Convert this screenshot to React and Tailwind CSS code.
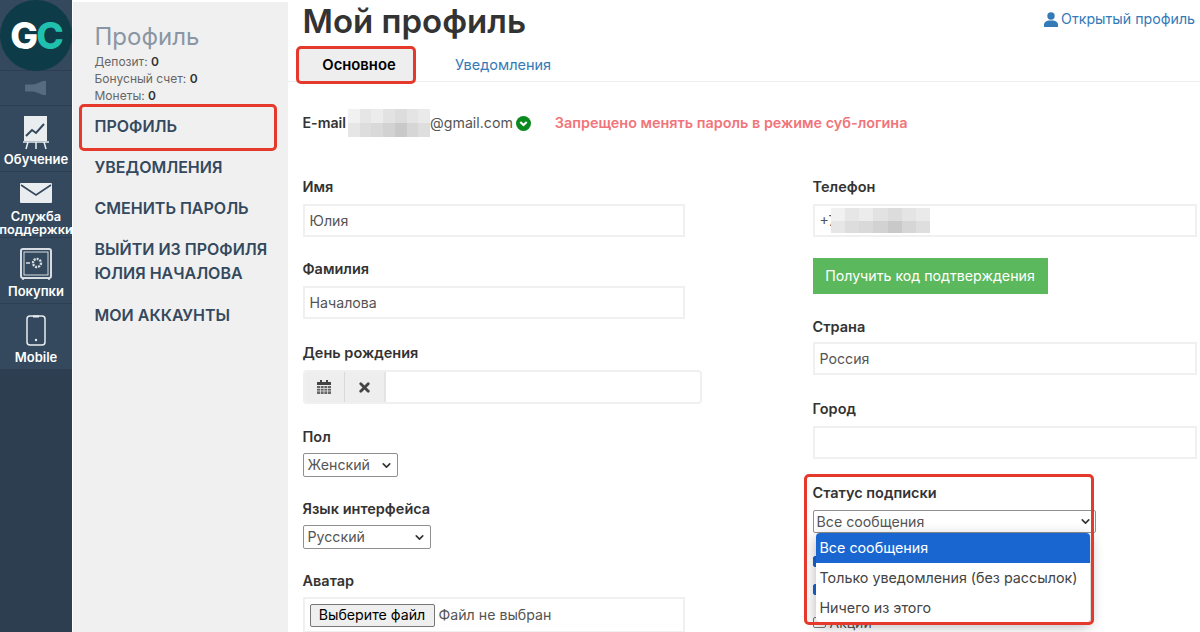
import { ChevronDown, X } from "lucide-react";

const sideLinks = [
  { label: "ПРОФИЛЬ", className: "mt-[10px]" },
  { label: "УВЕДОМЛЕНИЯ", className: "mt-[17px]" },
  { label: "СМЕНИТЬ ПАРОЛЬ", className: "mt-[17px]" },
  { label: "ВЫЙТИ ИЗ ПРОФИЛЯ ЮЛИЯ НАЧАЛОВА", className: "mt-[17px] w-[180px]" },
  { label: "МОИ АККАУНТЫ", className: "mt-[18px]" },
];

const mosaicTop = ["bg-[#f1f1f1]", "bg-[#e6e6e6]", "bg-[#ececec]", "bg-[#e2e2e2]", "bg-[#dcdcdc]", "bg-[#e4e4e4]", "bg-[#eaeaea]"];
const mosaicBottom = ["bg-[#e6e6e6]", "bg-[#dddddd]", "bg-[#d9d9d9]", "bg-[#d2d2d2]", "bg-[#c9c9c9]", "bg-[#d6d6d6]", "bg-[#dedede]"];

function Mosaic({ className }) {
  return (
    <div className={`grid grid-cols-7 ${className}`}>
      {mosaicTop.map((c, i) => (
        <div key={`t${i}`} className={c} />
      ))}
      {mosaicBottom.map((c, i) => (
        <div key={`b${i}`} className={c} />
      ))}
    </div>
  );
}

function RedBox({ className }) {
  return <div className={`absolute rounded-[5px] border-[3px] border-[#e5392c] ${className}`} />;
}

function Label({ children }) {
  return <div className="h-5 text-[14.5px] leading-5 font-semibold text-[#333]">{children}</div>;
}

function TextBox({ value, className = "mt-[7px]" }) {
  return (
    <div className={`flex h-[33px] items-center border-2 border-[#f0f0f0] px-[5px] text-[14.2px] text-[#555] ${className}`}>
      {value}
    </div>
  );
}

function SelectBox({ value, className = "" }) {
  return (
    <div className={`mt-[6px] flex h-6 items-center justify-between rounded-[2px] border border-[#8f8f8f] pl-1 pr-1 text-[14.2px] text-[#555] ${className}`}>
      <span>{value}</span>
      <ChevronDown size={13} strokeWidth={3} className="text-[#333]" />
    </div>
  );
}

function CheckRow({ label, checked, className = "" }) {
  return (
    <div className={`flex h-[14px] items-center gap-[4px] text-[14px] text-[#555] ${className}`}>
      <div className={`h-[11px] w-[13px] rounded-[2px] border ${checked ? "border-[#1a66d0] bg-[#1a66d0]" : "border-[#777] bg-white"}`} />
      {label}
    </div>
  );
}

function Rail() {
  return (
    <aside className="flex w-[72px] shrink-0 flex-col overflow-hidden bg-[#2c3e50]">
      <div className="h-[71px] border-b border-[#2c3e50] bg-[#34495e]">
        <div className="flex h-[71px] w-[72px] items-center justify-center rounded-full bg-[#0e3b48] text-[37px] leading-none font-extrabold tracking-[-2px]">
          <span className="text-white">G</span>
          <span className="text-[#20c0ae]">C</span>
        </div>
      </div>
      <div className="flex h-[35px] items-center justify-center border-b border-[#2c3e50] bg-[#34495e]">
        <svg width="22" height="14" viewBox="0 0 22 14" className="text-[#566a80]">
          <path d="M0 4.500a1 1 0 0 1 1-1h8L18 0h3v14h-3L9 10.500H1a1 1 0 0 1-1-1z" fill="currentColor" />
        </svg>
      </div>
      <div className="flex h-[66px] flex-col items-center border-b border-[#2c3e50] bg-[#34495e] pt-[10px]">
        <svg width="26" height="34" viewBox="0 0 26 34" className="shrink-0 text-[#e9edf0]">
          <rect x="1" y="0" width="23" height="25" fill="currentColor" />
          <path d="M3 20l6-6 4 3 8-9" stroke="#34495e" strokeWidth="2" fill="none" />
          <path d="M0 26h26M5 26l-2 7M13 26v7M21 26l2 7" stroke="currentColor" strokeWidth="1.500" />
        </svg>
        <div className="mt-[2px] text-[13px] leading-[15px] font-semibold text-white">Обучение</div>
      </div>
      <div className="flex h-[66px] flex-col items-center border-b border-[#2c3e50] bg-[#34495e] pt-[11px]">
        <svg width="32" height="20" viewBox="0 0 32 20" className="shrink-0 text-[#e9edf0]">
          <rect width="32" height="20" rx="1" fill="currentColor" />
          <path d="M1 2l15 10L31 2" stroke="#34495e" strokeWidth="1.600" fill="none" />
        </svg>
        <div className="mt-[7px] text-center text-[12.8px] leading-[13px] font-semibold whitespace-nowrap text-white">
          Служба
          <br />
          поддержки
        </div>
      </div>
      <div className="flex h-[66px] flex-col items-center border-b border-[#2c3e50] bg-[#34495e] pt-[10px]">
        <svg width="32" height="33" viewBox="0 0 32 33" className="shrink-0 text-[#d7dde2]">
          <rect x="1" y="1" width="30" height="29" rx="2" fill="none" stroke="currentColor" strokeWidth="2" />
          <rect x="4" y="4" width="24" height="23" fill="#34495e" stroke="currentColor" strokeWidth="1" />
          <circle cx="17" cy="15" r="4" fill="none" stroke="currentColor" strokeWidth="2.400" strokeDasharray="2 1" />
          <path d="M6 15h4M3 30v2M29 30v2" stroke="currentColor" strokeWidth="1.600" />
        </svg>
        <div className="mt-[3px] text-[13px] leading-[15px] font-semibold text-white">Покупки</div>
      </div>
      <div className="flex h-[65px] flex-col items-center bg-[#34495e] pt-[11px]">
        <svg width="20" height="31" viewBox="0 0 20 31" className="shrink-0 text-[#e9edf0]">
          <rect x="1" y="1" width="18" height="29" rx="3" fill="none" stroke="currentColor" strokeWidth="1.500" />
          <path d="M7 1.500h6" stroke="currentColor" strokeWidth="2" />
          <circle cx="10" cy="25" r="1.200" fill="currentColor" />
        </svg>
        <div className="mt-[4px] text-[13px] leading-[15px] font-semibold text-white">Mobile</div>
      </div>
    </aside>
  );
}

function SideMenu() {
  return (
    <nav className="relative ml-px mt-[2px] w-[215px] shrink-0 bg-[#f0f0f0] pl-[21.5px]">
      <div className="mt-[20px] text-[24px] leading-[30px] text-[#8a96a3]">Профиль</div>
      <div className="mt-[1px] text-[12px] leading-[17px] text-[#666]">
        <div>
          Депозит: <b className="font-semibold text-[#333]">0</b>
        </div>
        <div>
          Бонусный счет: <b className="font-semibold text-[#333]">0</b>
        </div>
        <div>
          Монеты: <b className="font-semibold text-[#333]">0</b>
        </div>
      </div>
      {sideLinks.map((link) => (
        <div key={link.label} className={`text-[16px] leading-[24px] font-semibold text-[#34495e] ${link.className}`}>
          {link.label}
        </div>
      ))}
    </nav>
  );
}

function LeftColumn() {
  return (
    <div className="w-[398px]">
      <Label>Имя</Label>
      <TextBox value="Юлия" className="mt-[7px] w-[382px]" />
      <div className="mt-[22px]">
        <Label>Фамилия</Label>
        <TextBox value="Началова" className="mt-[7px] w-[382px]" />
      </div>
      <div className="mt-[24px]">
        <Label>День рождения</Label>
        <div className="mt-[7px] flex h-[34px] w-[399px] overflow-hidden rounded-[4px] border-2 border-[#f0f0f0]">
          <div className="flex w-[40px] items-center justify-center border-r border-[#d9d9d9] bg-[#eeeeee]">
            <svg width="14" height="14" viewBox="0 0 14 14" className="text-[#444]">
              <path d="M0 2h14v3H0zM3 0h2v2H3zM9 0h2v2H9z" fill="currentColor" />
              <path d="M0 6h14v8H0z" fill="currentColor" opacity="0.8" />
              <path d="M0 8.500h14M0 11h14M3.500 6v8M7 6v8M10.500 6v8" stroke="#eeeeee" strokeWidth="0.700" />
            </svg>
          </div>
          <div className="flex w-[41px] items-center justify-center border-r-2 border-[#e4e4e4] bg-[#eeeeee]">
            <X size={15} strokeWidth={4.500} className="text-[#444]" />
          </div>
        </div>
      </div>
      <div className="mt-[23px]">
        <Label>Пол</Label>
        <SelectBox value="Женский" className="w-[95px]" />
      </div>
      <div className="mt-[22px]">
        <Label>Язык интерфейса</Label>
        <SelectBox value="Русский" className="w-[128px]" />
      </div>
      <div className="mt-[22px]">
        <Label>Аватар</Label>
        <div className="mt-[6px] flex h-[36px] w-[382px] items-center gap-[4px] border-2 border-[#f0f0f0] pl-[5px] text-[14.2px] text-[#555]">
          <div className="flex h-[23px] w-[125px] items-center justify-center rounded-[2px] border border-[#767676] bg-[#efefef] text-[14.2px] text-black">
            Выберите файл
          </div>
          Файл не выбран
        </div>
      </div>
    </div>
  );
}

function RightColumn() {
  return (
    <div className="relative w-[384px]">
      <Label>Телефон</Label>
      <div className="relative">
        <TextBox value="+7" />
        <Mosaic className="absolute top-[4px] left-[18px] h-[25px] w-[100px]" />
      </div>
      <div className="mt-[21px] flex h-9 w-[235px] items-center justify-center bg-[#5cb85c] text-[14.2px] text-white">
        Получить код подтверждения
      </div>
      <div className="mt-[23px]">
        <Label>Страна</Label>
        <TextBox value="Россия" className="mt-[5px]" />
      </div>
      <div className="mt-[24px]">
        <Label>Город</Label>
        <TextBox value="" />
      </div>
      <div className="mt-[24px]">
        <Label>Статус подписки</Label>
        <div className="mt-[7px] flex h-[23px] w-[283px] items-center justify-between rounded-[2px] border border-[#8f8f8f] pl-[3px] pr-[3px] text-[14.2px] text-[#555]">
          <span>Все сообщения</span>
          <ChevronDown size={13} strokeWidth={3} className="text-[#333]" />
        </div>
      </div>
      <CheckRow label="" checked className="mt-[21px]" />
      <CheckRow label="" checked className="mt-[14px]" />
      <CheckRow label="Акции" className="mt-[19px]" />
      <div className="absolute top-[356px] left-[3px] w-[274px] overflow-hidden rounded-[4px] bg-white text-[14.3px] text-[#444] shadow-[0_4px_14px_rgba(0,0,0,0.3)]">
        <div className="flex h-[30px] items-center bg-[#1a66d0] pl-1 text-white">Все сообщения</div>
        <div className="flex h-[30px] items-center pl-1">Только уведомления (без рассылок)</div>
        <div className="flex h-[29px] items-center pl-1">Ничего из этого</div>
      </div>
    </div>
  );
}

export default function App() {
  return (
    <div className="relative flex h-[632px] w-[1200px] overflow-hidden bg-white [font-family:Inter,sans-serif]">
      <Rail />
      <SideMenu />
      <main className="min-w-0 flex-1">
        <header className="flex h-[48px] items-start justify-between pl-[14.5px] pr-[5px]">
          <h1 className="text-[33px] leading-[42px] font-semibold text-[#333]">Мой профиль</h1>
          <a className="mt-[10px] flex items-center gap-[3px] text-[14.2px] leading-[18px] text-[#337ab7]">
            <svg width="14" height="15" viewBox="0 0 14 15" className="text-[#337ab7]">
              <circle cx="7" cy="4" r="3.700" fill="currentColor" />
              <path d="M0 15v-2.500c0-2 2-3.500 4.500-4h5c2.500.5 4.500 2 4.500 4V15z" fill="currentColor" />
            </svg>
            Открытый профиль
          </a>
        </header>
        <div className="flex h-[34px] items-start border-b border-[#eeeeee] pl-[11px]">
          <div className="mt-px flex h-[32px] w-[114px] items-center justify-center bg-[#eeeeee] pl-[6px] text-[14.8px] font-semibold text-black">
            Основное
          </div>
          <div className="ml-[42px] flex h-[33px] items-center text-[14.5px] text-[#337ab7]">Уведомления</div>
        </div>
        <div className="mt-[31px] flex h-5 items-center pl-[14.5px] text-[14.2px] text-[#333]">
          <span className="font-semibold">E-mail</span>
          <Mosaic className="ml-[2px] h-[28px] w-[82px]" />
          <span className="text-[#555]">@gmail.com</span>
          <svg width="15" height="15" viewBox="0 0 14 14" className="ml-[3px]">
            <circle cx="7" cy="7" r="7" fill="#0a8a1e" />
            <path d="M4 5.500L7 8.500 10 5.500" stroke="white" strokeWidth="2" fill="none" />
          </svg>
          <span className="ml-[24px] text-[14.4px] font-semibold text-[#f0757a]">Запрещено менять пароль в режиме суб-логина</span>
        </div>
        <div className="mt-[44px] flex gap-[112px] pl-[14.5px]">
          <LeftColumn />
          <RightColumn />
        </div>
      </main>
      <RedBox className="top-[46px] left-[296px] h-[38px] w-[120px]" />
      <RedBox className="top-[104px] left-[79px] h-[47px] w-[198px]" />
      <RedBox className="top-[474px] left-[804px] h-[151px] w-[290px]" />
    </div>
  );
}
